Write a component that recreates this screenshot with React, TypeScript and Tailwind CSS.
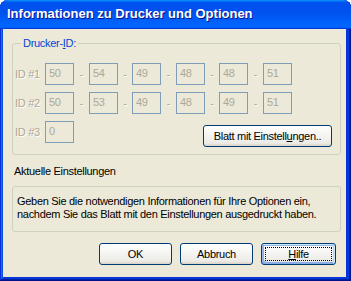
import React from "react";

const dis = "text-[#ACA899] [text-shadow:1px_1px_0_#ffffff]";

function Box({ v }: { v: string }) {
  return (
    <div className="w-[29px] h-[22px] border border-[#7F9DB9] bg-[#ECE9D8] pl-[3px] pt-[3px] text-[#ACA899] leading-[13px]">
      {v}
    </div>
  );
}

function Dash({ w }: { w: string }) {
  return <div className={`${w} flex justify-center items-center h-[22px] ${dis}`}>-</div>;
}

function Row({ label, vals }: { label: string; vals: string[] }) {
  return (
    <div className="flex items-start">
      <div className={`w-[30px] h-[22px] flex items-center ${dis}`}>{label}</div>
      <Box v={vals[0]} />
      <Dash w="w-[15px]" />
      <Box v={vals[1]} />
      <Dash w="w-[14px]" />
      <Box v={vals[2]} />
      <Dash w="w-[15px]" />
      <Box v={vals[3]} />
      <Dash w="w-[14px]" />
      <Box v={vals[4]} />
      <Dash w="w-[15px]" />
      <Box v={vals[5]} />
    </div>
  );
}

const btn =
  "h-[22px] border border-[#003C74] rounded-[3px] bg-[linear-gradient(180deg,#ffffff,#ecebe5_86%,#d8d0c4)] text-black flex items-center justify-center";

export default function App() {
  return (
    <div className="w-[351px] h-[281px] flex flex-col rounded-t-[8px] overflow-hidden bg-[#0831D9] shadow-[inset_-1px_-1px_#00138c,inset_1px_1px_#0831d9,inset_-2px_-2px_#001ea0,inset_2px_2px_#166aee,inset_-3px_-3px_#003bda,inset_3px_3px_#0855dd] font-['Liberation_Sans',Arial,sans-serif] text-[11px] leading-[13px]">
      <div className="h-[29px] shrink-0 flex items-center pl-[7px] pb-[1px] bg-[linear-gradient(180deg,#0997ff,#0053ee_8%,#0050ee_40%,#0066ff_88%,#0066ff_93%,#005bff_95%,#003dd7_96%,#003dd7)]">
        <span className="text-white font-bold text-[13px] leading-[16px] [text-shadow:1px_1px_#0F1089]">
          Informationen zu Drucker und Optionen
        </span>
      </div>
      <div className="flex-1 flex flex-col ml-[3px] mr-[5px] mb-[4px] bg-[#ECE9D8] pl-[9px] tracking-[-0.3px]">
        <fieldset className="mt-[8px] w-[329px] border border-[#D0D0BF] rounded-[3px] pl-[2px] pt-[13px] pb-[7px]">
          <legend className="ml-[6px] px-[2px] text-[#0046D5] leading-[13px]">
            Drucker-<span className="underline">I</span>D:
          </legend>
          <div className="flex flex-col gap-[7px]">
            <Row label="ID #1" vals={["50", "54", "49", "48", "48", "51"]} />
            <Row label="ID #2" vals={["50", "53", "49", "48", "49", "51"]} />
            <div className="flex items-start">
              <div className={`w-[30px] h-[22px] flex items-center ${dis}`}>ID #3</div>
              <Box v="0" />
              <div className="flex-1" />
              <div className={`${btn} mt-[4px] mr-[8px] w-[129px]`}>
                Blatt mit Einstell<span className="underline">u</span>ngen..
              </div>
            </div>
          </div>
        </fieldset>
        <div className="mt-[10px] pl-[2px] text-black">Aktuelle Einstellungen</div>
        <div className="mt-[8px] w-[329px] border border-[#D0D0BF] rounded-[3px] pl-[4px] pt-[8px] pb-[10px] text-black">
          Geben Sie die notwendigen Informationen für Ihre Optionen ein,
          <br />
          nachdem Sie das Blatt mit den Einstellungen ausgedruckt haben.
        </div>
        <div className="mt-[11px] flex gap-[8px] pl-[87px]">
          <div className={`${btn} w-[73px]`}>OK</div>
          <div className={`${btn} w-[73px]`}>Abbruch</div>
          <div
            className={`${btn} w-[75px] relative shadow-[inset_-1px_1px_#cee7ff,inset_1px_2px_#98b8ea,inset_-2px_2px_#bcd4f6,inset_1px_-1px_#89ade4,inset_2px_-2px_#89ade4]`}
          >
            <div className="absolute inset-[3px] border border-dotted border-black" />
            <span>
              <span className="underline">H</span>ilfe
            </span>
          </div>
        </div>
      </div>
    </div>
  );
}
